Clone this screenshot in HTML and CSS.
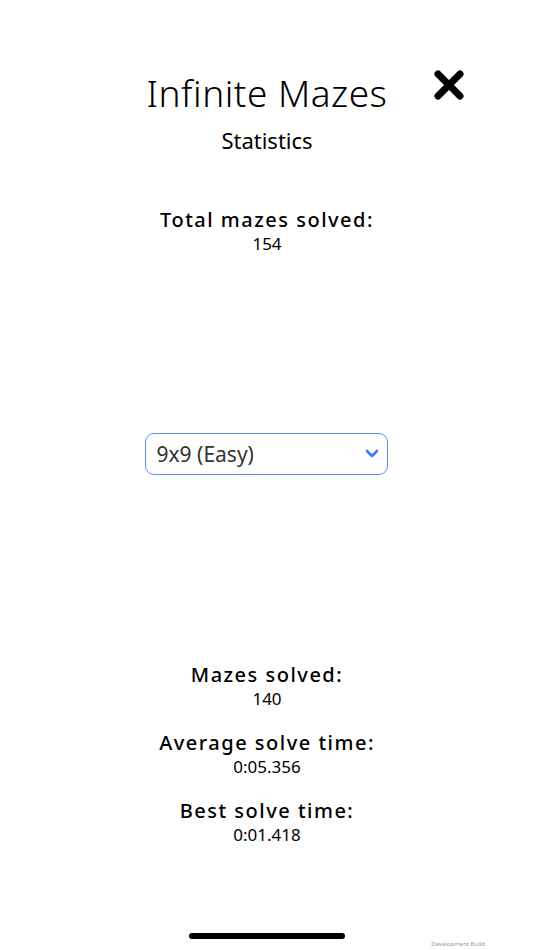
FILE: index.html
```html
<!DOCTYPE html>
<html lang="en">
  <head>
    <meta charset="UTF-8" />
    <meta name="viewport" content="width=device-width, initial-scale=1.0" />
    <title>Infinite Mazes - Statistics</title>
    <link rel="stylesheet" href="styles.css">
  </head>
  <body>
    <div class="screen">
      <header class="header">
        <div></div>
        <h1>Infinite Mazes</h1>
        <button type="button" class="close" aria-label="Close">
          <svg width="32" height="32" viewBox="0 0 32 32">
            <path d="M5 5 L27 27 M27 5 L5 27" stroke="#000" stroke-width="7" stroke-linecap="round" />
          </svg>
        </button>
      </header>
      <h2 class="subtitle">Statistics</h2>

      <div class="stat total">
        <div class="stat-label">Total mazes solved:</div>
        <div class="stat-value">154</div>
      </div>

      <div class="picker">
        <span>9x9 (Easy)</span>
        <svg width="14" height="10" viewBox="0 0 14 10">
          <path d="M2 2 L7 7 L12 2" fill="none" stroke="#3b7bf2" stroke-width="2.6" stroke-linecap="round" stroke-linejoin="round" />
        </svg>
      </div>

      <div class="stats">
        <div class="stat">
          <div class="stat-label">Mazes solved:</div>
          <div class="stat-value">140</div>
        </div>
        <div class="stat">
          <div class="stat-label">Average solve time:</div>
          <div class="stat-value">0:05.356</div>
        </div>
        <div class="stat">
          <div class="stat-label">Best solve time:</div>
          <div class="stat-value">0:01.418</div>
        </div>
      </div>

      <div class="home-bar"></div>
      <div class="build">Development Build</div>
    </div>
  </body>
</html>
```

FILE: styles.css
```css
body {
  margin: 0;
  padding: 0;
  background: #fff;
  color: #000;
  font-family: "Noto Sans", "DejaVu Sans", sans-serif;
}

.screen {
  width: 534px;
  height: 950px;
  display: flex;
  flex-direction: column;
  align-items: center;
  overflow: hidden;
}

.header {
  width: 100%;
  display: grid;
  grid-template-columns: 1fr auto 1fr;
  align-items: center;
  margin-top: 66px;
}

.header h1 {
  margin: 0;
  font-size: 37px;
  font-weight: 300;
  letter-spacing: 0.5px;
  line-height: 54px;
}

.close {
  justify-self: start;
  margin-left: 46px;
  margin-top: -16px;
  padding: 0;
  border: none;
  background: none;
  width: 32px;
  height: 32px;
  cursor: pointer;
}

.subtitle {
  margin: 5px 0 0;
  font-size: 22px;
  font-weight: 400;
  line-height: 30px;
}

.stat {
  text-align: center;
}

.stat-label {
  font-size: 20px;
  font-weight: 500;
  letter-spacing: 1.5px;
  line-height: 26px;
}

.stat-value {
  font-size: 17px;
  line-height: 22px;
}

.total {
  margin-top: 52px;
}

.picker {
  margin-top: 178px;
  margin-left: -2px;
  width: 243px;
  height: 42px;
  box-sizing: border-box;
  border: 1.5px solid #5b8ef0;
  border-radius: 9px;
  display: flex;
  align-items: center;
  justify-content: space-between;
  padding: 0 8px 0 11px;
  font-size: 21px;
  color: #333;
}

.stats {
  margin-top: 187px;
  display: flex;
  flex-direction: column;
  gap: 20px;
}

.home-bar {
  margin-top: auto;
  margin-bottom: 0;
  width: 156px;
  height: 6px;
  border-radius: 3px;
  background: #000;
}

.build {
  align-self: flex-end;
  margin: 1px 49px 2px 0;
  font-size: 6px;
  color: #999;
}
```
